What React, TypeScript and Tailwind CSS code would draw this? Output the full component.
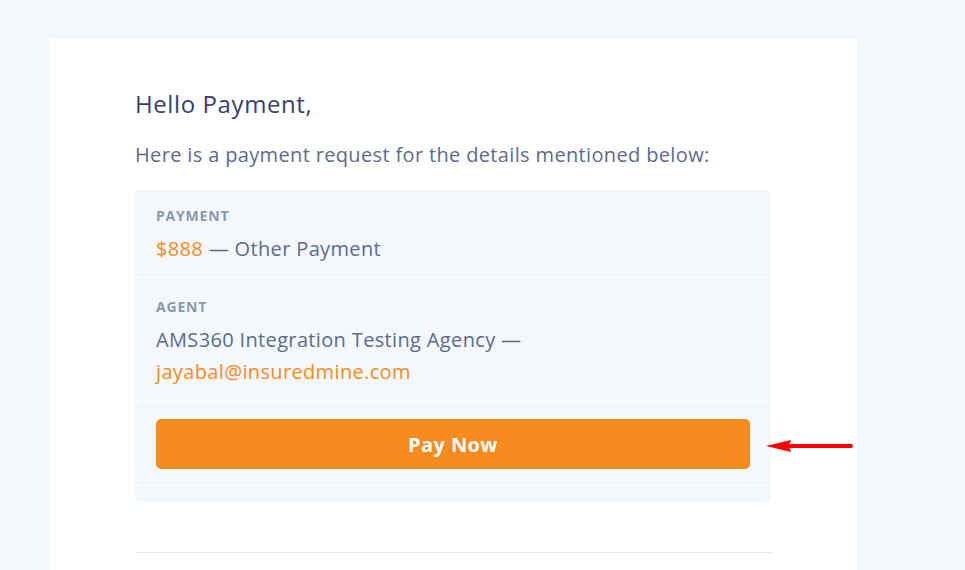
export default function App() {
  return (
    <div
      className="min-h-screen w-full bg-[#f5f8fb] pt-[39px] pl-[49px] overflow-hidden"
      style={{ fontFamily: '"Open Sans", "Noto Sans", sans-serif' }}
    >
      <div className="w-[810px] min-h-[531px] bg-white pl-[86px] pr-[87px] pt-[47px] pb-[20px] border-r border-[#eef1f5]">
        <h1 className="text-[24px] leading-[36px] tracking-[0.6px] text-[#3b3e6b] font-normal">Hello Payment,</h1>
        <p className="mt-[18px] text-[20px] leading-[30px] tracking-[0.35px] text-[#5d6b8d]">
          Here is a payment request for the details mentioned below:
        </p>

        <div className="mt-[19px] rounded-[6px] bg-[#f4f8fc]">
          <div className="px-[21px] pt-[17px] pb-[12px] border-b border-white">
            <div className="text-[14px] leading-[20px] font-bold tracking-[0.8px] text-[#8a98ad]">PAYMENT</div>
            <div className="mt-[7px] text-[20px] leading-[32px] tracking-[0.35px] text-[#5d6b8d]">
              <span className="text-[#f68b1f]">$888</span> — Other Payment
            </div>
          </div>
          <div className="px-[21px] pt-[19px] pb-[13px] border-b border-white">
            <div className="text-[14px] leading-[20px] font-bold tracking-[0.8px] text-[#8a98ad]">AGENT</div>
            <div className="mt-[7px] text-[20px] leading-[32px] tracking-[0.35px] text-[#5d6b8d]">
              AMS360 Integration Testing Agency —
              <br />
              <span className="text-[#f68b1f]">jayabal@insuredmine.com</span>
            </div>
          </div>
          <div className="relative px-[21px] pt-[17px] pb-[16px] border-b border-white">
            <button className="w-full h-[50px] rounded-[5px] bg-[#f68b1f] text-white text-[20px] tracking-[0.4px] font-bold pt-[2px]">
              Pay Now
            </button>
            <svg
              className="absolute left-[630px] top-[34px]"
              width="90"
              height="20"
              viewBox="0 0 90 20"
            >
              <line x1="20" y1="10" x2="86" y2="10" stroke="#f00" strokeWidth="4" strokeLinecap="round" />
              <polygon points="1,10 26,4 24,10 26,16" fill="#f00" />
            </svg>
          </div>
          <div className="h-[16px]" />
        </div>

        <div className="mt-[50px] h-px bg-[#e3e8f0]" />
      </div>
    </div>
  );
}
